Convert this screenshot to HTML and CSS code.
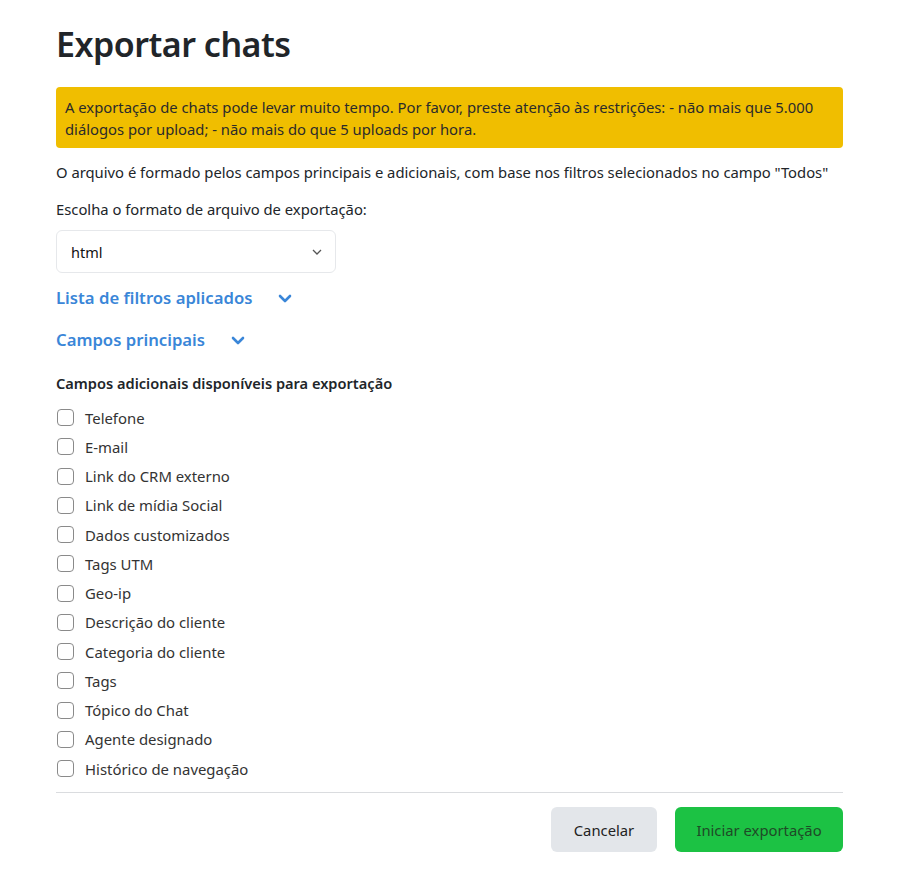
FILE: index.html
```html
<!DOCTYPE html>
<html lang="pt">
<head>
<meta charset="utf-8">
<link rel="stylesheet" href="styles.css">
</head>
<body>
<div class="page">
  <h1 class="title">Exportar chats</h1>
  <div class="warning">A exportação de chats pode levar muito tempo. Por favor, preste atenção às restrições: - não mais que 5.000 diálogos por upload; - não mais do que 5 uploads por hora.</div>
  <p class="info">O arquivo é formado pelos campos principais e adicionais, com base nos filtros selecionados no campo "Todos"</p>
  <p class="label">Escolha o formato de arquivo de exportação:</p>
  <div class="select">
    <span>html</span>
    <svg class="sel-chev" width="10" height="6" viewBox="0 0 10 6"><path d="M1 1l4 4 4-4" fill="none" stroke="#555" stroke-width="1.3"/></svg>
  </div>
  <div class="toggle t1">Lista de filtros aplicados
    <svg class="chev" width="14" height="9" viewBox="0 0 14 9"><path d="M2 2l5 5 5-5" fill="none" stroke="#3a86d8" stroke-width="2.6" stroke-linecap="round" stroke-linejoin="round"/></svg>
  </div>
  <div class="toggle t2">Campos principais
    <svg class="chev" width="14" height="9" viewBox="0 0 14 9"><path d="M2 2l5 5 5-5" fill="none" stroke="#3a86d8" stroke-width="2.6" stroke-linecap="round" stroke-linejoin="round"/></svg>
  </div>
  <div class="subhead">Campos adicionais disponíveis para exportação</div>
  <ul class="checks">
    <li><span class="box"></span>Telefone</li>
    <li><span class="box"></span>E-mail</li>
    <li><span class="box"></span>Link do CRM externo</li>
    <li><span class="box"></span>Link de mídia Social</li>
    <li><span class="box"></span>Dados customizados</li>
    <li><span class="box"></span>Tags UTM</li>
    <li><span class="box"></span>Geo-ip</li>
    <li><span class="box"></span>Descrição do cliente</li>
    <li><span class="box"></span>Categoria do cliente</li>
    <li><span class="box"></span>Tags</li>
    <li><span class="box"></span>Tópico do Chat</li>
    <li><span class="box"></span>Agente designado</li>
    <li><span class="box"></span>Histórico de navegação</li>
  </ul>
  <div class="footer">
    <button class="btn cancel">Cancelar</button>
    <button class="btn start">Iniciar exportação</button>
  </div>
</div>
</body>
</html>
```
FILE: styles.css
```css
* { box-sizing: border-box; }
body {
  margin: 0;
  background: #fff;
  font-family: "Noto Sans", "Open Sans", sans-serif;
  color: #212529;
}
.page {
  width: 787px;
  margin-left: 56px;
  padding-top: 24px;
}
.title {
  margin: 0;
  font-size: 34px;
  line-height: 41px;
  font-weight: 600;
  color: #212529;
  letter-spacing: -0.5px;
}
.warning {
  margin-top: 22px;
  background: #f0be00;
  border-radius: 4px;
  padding: 9px 9px 8px 9px;
  font-size: 14.8px;
  line-height: 22px;
  color: #2b2b2b;
}
.info {
  margin: 14px 0 0;
  font-size: 14.8px;
  line-height: 21px;
}
.label {
  margin: 16px 0 0;
  font-size: 14.8px;
  line-height: 21px;
}
.select {
  margin-top: 10px;
  width: 280px;
  height: 43px;
  border: 1px solid #e6e8eb;
  border-radius: 6px;
  display: flex;
  align-items: center;
  justify-content: space-between;
  padding: 0 13px 0 14px;
  font-size: 14.5px;
  color: #111;
}
.toggle {
  display: flex;
  align-items: center;
  font-size: 16.7px;
  line-height: 24px;
  font-weight: 600;
  color: #3a86d8;
}
.t1 { margin-top: 13px; gap: 26px; }
.t2 { margin-top: 18px; gap: 26px; }
.chev { margin-top: 1px; }
.subhead {
  margin-top: 21px;
  font-size: 14.6px;
  line-height: 20px;
  font-weight: 600;
}
.checks {
  list-style: none;
  margin: 10px 0 0;
  padding: 0;
}
.checks li {
  display: flex;
  align-items: center;
  height: 29.25px;
  font-size: 14.9px;
  color: #333;
}
.box {
  width: 17px;
  height: 17px;
  border: 1px solid #8a8a8a;
  border-radius: 4px;
  margin-left: 1px;
  margin-right: 11px;
}
.footer {
  margin-top: 9px;
  border-top: 1px solid #dadcdf;
  padding-top: 14px;
  display: flex;
  justify-content: flex-end;
  gap: 18px;
}
.btn {
  height: 45px;
  border: none;
  border-radius: 6px;
  font-family: inherit;
  font-size: 14.8px;
}
.cancel {
  width: 106px;
  background: #e3e6ea;
  color: #222;
}
.start {
  width: 168px;
  background: #1cc244;
  color: #1f4a27;
}
```
